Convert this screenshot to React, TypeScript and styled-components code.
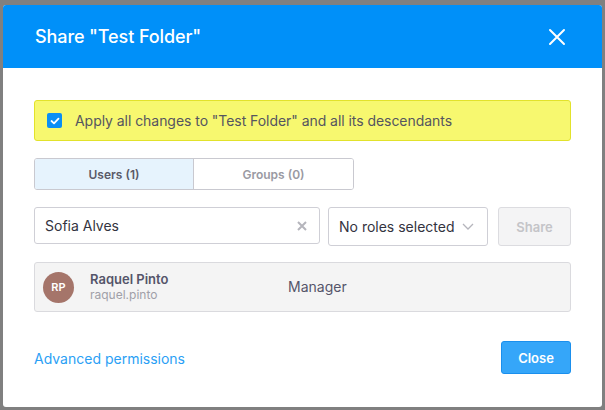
import * as React from 'react';
import styled, { createGlobalStyle } from 'styled-components';

//#region styled
const GlobalStyle = createGlobalStyle`
  html, body {
    margin: 0;
    padding: 0;
    background: #7f7f7f;
    font-family: Inter, "Noto Sans", "Liberation Sans", sans-serif;
  }
`

const Backdrop = styled.div`
  width: 605px;
  height: 410px;
  padding: 5px 3px 3px 3px;
  box-sizing: border-box;
  background: #808080;
`

const Modal = styled.div`
  height: 402px;
  background: #fff;
  border-radius: 3px;
  overflow: hidden;
  display: flex;
  flex-direction: column;
`

const Header = styled.div`
  height: 63px;
  background: #0090f9;
  display: flex;
  align-items: center;
  justify-content: space-between;
  padding: 0 36px 0 32px;
  flex-shrink: 0;
`

const Title = styled.h1`
  margin: 0;
  font-size: 18px;
  font-weight: 500;
  color: #fff;
  letter-spacing: -0.1px;
`

const CloseIcon = styled.button`
  border: none;
  background: none;
  padding: 0;
  width: 18px;
  height: 18px;
  display: flex;
  cursor: pointer;
`

const Body = styled.div`
  padding: 32px 31px 0 31px;
  display: flex;
  flex-direction: column;
  flex: 1;
`

const Notice = styled.label`
  height: 41px;
  box-sizing: border-box;
  background: #f7f86f;
  border: 1px solid #e2e22b;
  border-radius: 3px;
  display: flex;
  align-items: center;
  gap: 13px;
  padding: 0 12px;
  font-size: 14px;
  color: #555560;
  letter-spacing: -0.05px;
`

const Check = styled.span`
  width: 15px;
  height: 15px;
  border-radius: 2px;
  background: #0a8ff5;
  display: flex;
  align-items: center;
  justify-content: center;
`

const Tabs = styled.div`
  margin-top: 17px;
  display: flex;
  width: 320px;
  height: 32px;
  box-sizing: border-box;
  border: 1px solid #c9c9d0;
  border-radius: 3px;
  overflow: hidden;
`

const Tab = styled.div<{ $active?: boolean }>`
  flex: ${p => p.$active ? '0 0 158px' : '1'};
  display: flex;
  align-items: center;
  justify-content: center;
  font-size: 12px;
  font-weight: 600;
  color: ${p => p.$active ? '#5a5a68' : '#9a9aa3'};
  background: ${p => p.$active ? '#e6f3fd' : '#fff'};
  border-right: ${p => p.$active ? '1px solid #c9c9d0' : 'none'};
`

const FormRow = styled.div`
  margin-top: 17px;
  display: flex;
  align-items: flex-start;
`

const SearchBox = styled.div`
  width: 286px;
  height: 37px;
  box-sizing: border-box;
  border: 1px solid #cfcfd6;
  border-radius: 3px;
  display: flex;
  align-items: center;
  justify-content: space-between;
  padding: 0 12px 0 10px;
  font-size: 14px;
  color: #333340;
`

const Select = styled.div`
  margin-left: 8px;
  width: 160px;
  height: 39px;
  box-sizing: border-box;
  border: 1px solid #cfcfd6;
  border-radius: 3px;
  display: flex;
  align-items: center;
  justify-content: space-between;
  padding: 0 13px 0 10px;
  font-size: 14px;
  color: #333340;
`

const ShareButton = styled.button`
  margin-left: 10px;
  width: 73px;
  height: 39px;
  box-sizing: border-box;
  border: 1px solid #dcdce0;
  border-radius: 3px;
  background: #f4f4f5;
  color: #c4c4c8;
  font-family: inherit;
  font-size: 13px;
  font-weight: 600;
`

const UserRow = styled.div`
  margin-top: 16px;
  height: 50px;
  box-sizing: border-box;
  background: #f4f4f4;
  border: 1px solid #dadade;
  border-radius: 3px;
  display: flex;
  align-items: center;
  padding: 0 8px;
`

const Avatar = styled.div`
  width: 31px;
  height: 31px;
  border-radius: 50%;
  background: #a5756a;
  color: #fff;
  font-size: 11px;
  font-weight: 600;
  display: flex;
  align-items: center;
  justify-content: center;
  flex-shrink: 0;
`

const UserInfo = styled.div`
  margin-left: 16px;
  width: 198px;
  display: flex;
  flex-direction: column;
  line-height: 16px;
`

const UserName = styled.span`
  font-size: 13px;
  font-weight: 600;
  color: #55556a;
`

const UserLogin = styled.span`
  font-size: 12px;
  color: #a0a0a8;
`

const Role = styled.span`
  font-size: 14px;
  color: #55556a;
  margin-top: -2px;
`

const Footer = styled.div`
  margin-top: auto;
  height: 97px;
  display: flex;
  align-items: center;
  justify-content: space-between;
  padding-bottom: 2px;
  box-sizing: border-box;
`

const Link = styled.a`
  font-size: 14px;
  color: #2b9ff5;
  text-decoration: none;
  margin-top: -2px;
`

const PrimaryButton = styled.button`
  width: 70px;
  height: 33px;
  border: 1px solid #1a8fed;
  border-radius: 3px;
  background: #35a6f9;
  color: #fff;
  font-family: inherit;
  font-size: 13px;
  font-weight: 600;
  margin-top: -4px;
`
//#endregion

export default function App() {
  return (
    <>
      <GlobalStyle />
      <Backdrop>
        <Modal>
          <Header>
            <Title>Share "Test Folder"</Title>
            <CloseIcon aria-label="Close">
              <svg width="18" height="18" viewBox="0 0 18 18">
                <path d="M2 2 L16 16 M16 2 L2 16" stroke="#fff" strokeWidth="2" strokeLinecap="round" />
              </svg>
            </CloseIcon>
          </Header>
          <Body>
            <Notice>
              <Check>
                <svg width="10" height="8" viewBox="0 0 10 8">
                  <path d="M1.5 4 L4 6.3 L8.5 1.6" stroke="#fff" strokeWidth="1.8" fill="none" strokeLinecap="round" strokeLinejoin="round" />
                </svg>
              </Check>
              Apply all changes to "Test Folder" and all its descendants
            </Notice>
            <Tabs>
              <Tab $active>Users (1)</Tab>
              <Tab>Groups (0)</Tab>
            </Tabs>
            <FormRow>
              <SearchBox>
                Sofia Alves
                <svg width="10" height="10" viewBox="0 0 10 10">
                  <path d="M1 1 L9 9 M9 1 L1 9" stroke="#b5b5bc" strokeWidth="2" />
                </svg>
              </SearchBox>
              <Select>
                No roles selected
                <svg width="12" height="7" viewBox="0 0 12 7">
                  <path d="M1 1 L6 6 L11 1" stroke="#b5b5bc" strokeWidth="1.3" fill="none" />
                </svg>
              </Select>
              <ShareButton disabled>Share</ShareButton>
            </FormRow>
            <UserRow>
              <Avatar>RP</Avatar>
              <UserInfo>
                <UserName>Raquel Pinto</UserName>
                <UserLogin>raquel.pinto</UserLogin>
              </UserInfo>
              <Role>Manager</Role>
            </UserRow>
            <Footer>
              <Link href="#">Advanced permissions</Link>
              <PrimaryButton>Close</PrimaryButton>
            </Footer>
          </Body>
        </Modal>
      </Backdrop>
    </>
  )
}
